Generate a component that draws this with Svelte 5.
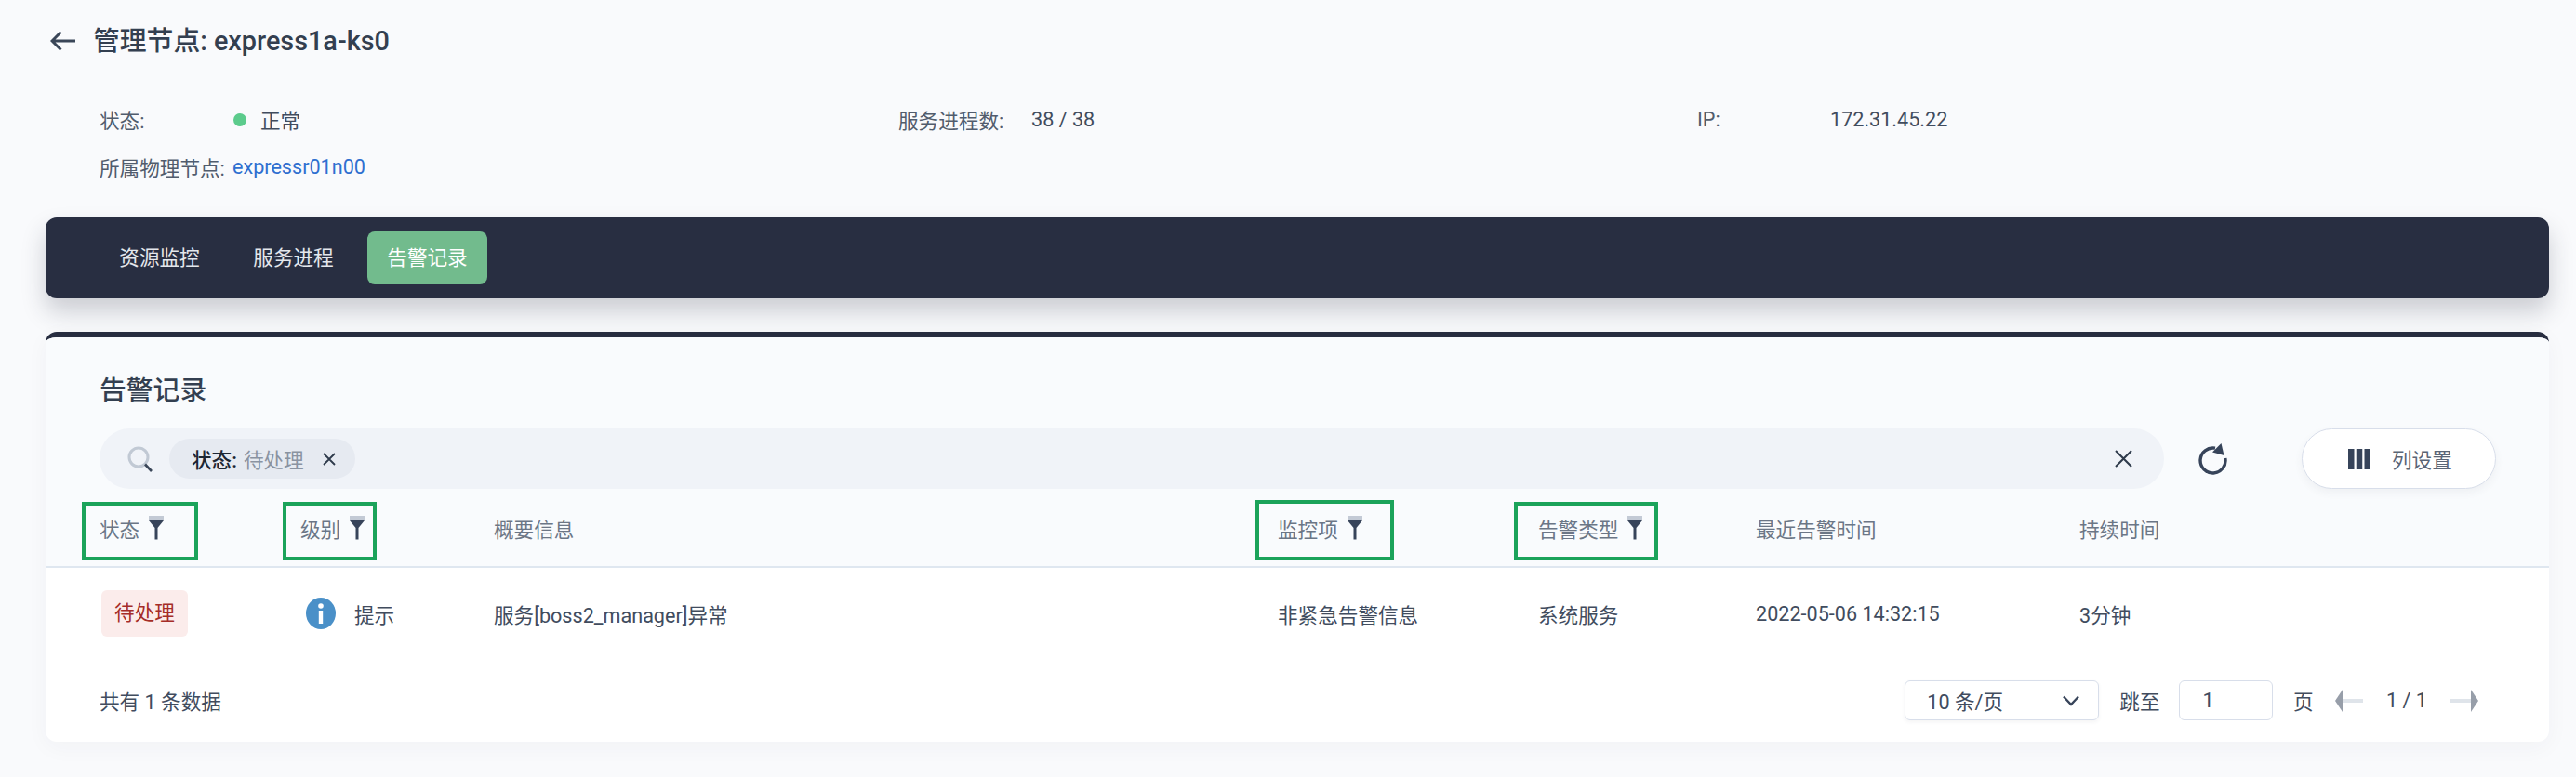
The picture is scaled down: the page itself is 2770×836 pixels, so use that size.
<script>
  const tabs = [
    { label: '资源监控', active: false },
    { label: '服务进程', active: false },
    { label: '告警记录', active: true }
  ];
  const cols = [
    { label: '状态', filter: true, box: 'b1' },
    { label: '级别', filter: true, box: 'b2' },
    { label: '概要信息' },
    { label: '监控项', filter: true, box: 'b3' },
    { label: '告警类型', filter: true, box: 'b4' },
    { label: '最近告警时间' },
    { label: '持续时间' }
  ];
</script>

{#snippet funnel()}
  <svg class="funnel" width="16" height="26" viewBox="0 0 16 26">
    <rect x="0" y="0" width="16" height="5" fill="#c3cad5" />
    <path d="M0 5H16L9.5 13V25.5H6.5V13Z" fill="#37445a" />
  </svg>
{/snippet}

<div class="page">
  <header class="top">
    <svg class="back" width="28" height="22" viewBox="0 0 28 22" fill="none" stroke="#3a4658" stroke-width="3">
      <path d="M27 11H2M11.5 1.5L2 11l9.5 9.5" />
    </svg>
    <h1>管理节点: express1a-ks0</h1>
  </header>

  <section class="info">
    <div class="item"><span class="k">状态:</span><span class="v"><i class="dot"></i>正常</span></div>
    <div class="item"><span class="k">服务进程数:</span><span class="v">38 / 38</span></div>
    <div class="item"><span class="k">IP:</span><span class="v">172.31.45.22</span></div>
    <div class="item"><span class="k">所属物理节点:</span><a class="v link" href="#top">expressr01n00</a></div>
  </section>

  <nav class="nav">
    {#each tabs as t}
      <span class="tab" class:active={t.active}>{t.label}</span>
    {/each}
  </nav>

  <section class="card">
    <div class="head">
      <h2>告警记录</h2>
      <div class="tools">
        <div class="search">
          <svg class="mag" width="28" height="28" viewBox="0 0 28 28" fill="none">
            <circle cx="12" cy="12" r="10" stroke="#c1c9d4" stroke-width="3" />
            <path d="M19 19.500L26 27" stroke="#3a4658" stroke-width="2.600" />
          </svg>
          <span class="chip">
            <b>状态:</b><span class="cv">待处理</span>
            <svg class="chipx" width="14" height="14" viewBox="0 0 14 14" stroke="#2e3a4b" stroke-width="1.800"><path d="M1 1l12 12M13 1L1 13" /></svg>
          </span>
          <svg class="clear" width="19" height="19" viewBox="0 0 19 19" stroke="#2e3a4b" stroke-width="2"><path d="M1 1l17 17M18 1L1 18" /></svg>
        </div>
        <svg class="refresh" width="32" height="34" viewBox="0 0 32 34" fill="none">
          <path d="M18 5.200A13.500 13.500 0 1 0 28.800 16" stroke="#37445a" stroke-width="3.400" />
          <path d="M24.500 0L27.500 13L15 9.500Z" fill="#37445a" />
        </svg>
        <button class="colset">
          <svg width="24" height="22" viewBox="0 0 24 22" fill="#37445a">
            <rect width="6.500" height="22" /><rect x="8.750" width="6.500" height="22" /><rect x="17.500" width="6.500" height="22" />
          </svg>
          <span>列设置</span>
        </button>
      </div>
      <div class="grid thead">
        {#each cols as c}
          <div class="th">
            {c.label}
            {#if c.filter}
              {@render funnel()}
              <i class="box {c.box}"></i>
            {/if}
          </div>
        {/each}
      </div>
    </div>

    <div class="body">
      <div class="grid row">
        <div><span class="tag">待处理</span></div>
        <div class="level">
          <svg width="32" height="34" viewBox="0 0 32 34">
            <ellipse cx="16" cy="17" rx="16" ry="17" fill="#4a90c8" />
            <circle cx="16" cy="9" r="2.800" fill="#fff" />
            <rect x="13.800" y="14" width="4.400" height="14" fill="#fff" />
          </svg>
          提示
        </div>
        <div>服务[boss2_manager]异常</div>
        <div>非紧急告警信息</div>
        <div>系统服务</div>
        <div>2022-05-06 14:32:15</div>
        <div>3分钟</div>
      </div>

      <footer class="foot">
        <span>共有 1 条数据</span>
        <div class="pager">
          <div class="select">
            <span>10 条/页</span>
            <svg width="18" height="12" viewBox="0 0 18 12" fill="none" stroke="#37445a" stroke-width="2.400"><path d="M1 1.500l8 8.500 8-8.500" /></svg>
          </div>
          <span class="jump">跳至</span>
          <div class="input">1</div>
          <span class="unit">页</span>
          <svg class="arrow" width="30" height="24" viewBox="0 0 30 24">
            <rect x="7" y="10" width="23" height="4" fill="#dfe4ea" /><path d="M0 12L8 0V24Z" fill="#979ea9" />
          </svg>
          <span class="count">1 / 1</span>
          <svg class="arrow" width="30" height="24" viewBox="0 0 30 24">
            <rect x="0" y="10" width="23" height="4" fill="#dfe4ea" /><path d="M30 12L22 0V24Z" fill="#979ea9" />
          </svg>
        </div>
      </footer>
    </div>
  </section>
</div>

<style>
  :global(body) {
    margin: 0;
    background: #f9fafc;
  }
  .page {
    width: 2770px;
    height: 836px;
    overflow: hidden;
    box-sizing: border-box;
    padding: 0 29px 0 49px;
    background: #f9fafc;
    font-family: Roboto, "Noto Sans CJK SC", sans-serif;
    font-size: 21.6px;
    color: #414c5e;
  }
  .top {
    height: 86px;
    display: flex;
    align-items: center;
    gap: 18px;
    padding-left: 5px;
  }
  .back { margin-top: 1px; }
  h1 {
    margin: 0 0 3px;
    font-size: 28.8px;
    font-weight: 500;
    color: #333f50;
  }
  .info {
    display: grid;
    grid-template-columns: repeat(3, 859px);
    grid-auto-rows: 51px;
    padding: 17px 0 0 58px;
    height: 148px;
    box-sizing: border-box;
  }
  .item {
    display: flex;
    align-items: center;
    color: #515c6d;
  }
  .k { width: 143px; flex: none; white-space: nowrap; }
  .v { color: #414c5e; display: inline-flex; align-items: center; }
  .link { color: #2f6fd0; text-decoration: none; }
  .dot {
    width: 14px;
    height: 14px;
    border-radius: 50%;
    background: #5ccb8c;
    margin: 0 15px 0 1px;
  }
  .nav {
    height: 87px;
    box-sizing: border-box;
    background: #282e41;
    border-radius: 12px;
    display: flex;
    align-items: center;
    gap: 16px;
    padding-left: 58px;
    box-shadow: 0 14px 26px rgba(40, 46, 65, 0.22);
    position: relative;
    z-index: 1;
  }
  .tab {
    height: 57px;
    width: 129px;
    margin-right: -1px;
    text-align: center;
    line-height: 57px;
    color: #e4e7ec;
    border-radius: 8px;
  }
  .tab.active {
    background: #72bb8d;
    color: #fff;
  }
  .card {
    margin-top: 36px;
    height: 441px;
    box-sizing: border-box;
    border-top: 6px solid #282e41;
    border-radius: 12px;
    background: #fff;
    overflow: hidden;
    box-shadow: 0 6px 24px rgba(40, 46, 65, 0.04);
  }
  .head {
    background: #f9fbfd;
    height: 248px;
    box-sizing: border-box;
    border-bottom: 2px solid #dfe7f0;
    padding-top: 38px;
  }
  h2 {
    margin: 0 0 0 58px;
    font-size: 28.8px;
    line-height: 38px;
    font-weight: 500;
    color: #333f50;
  }
  .tools {
    display: flex;
    align-items: center;
    margin: 22px 0 0 58px;
    height: 65px;
  }
  .search {
    width: 2220px;
    height: 65px;
    box-sizing: border-box;
    border-radius: 33px;
    background: #f0f3f8;
    display: flex;
    align-items: center;
    padding: 0 34px 0 30px;
    flex: none;
  }
  .chip {
    margin-left: 17px;
    height: 43px;
    width: 200px;
    box-sizing: border-box;
    border-radius: 22px;
    background: #e6eaf1;
    display: flex;
    align-items: center;
    padding-left: 24px;
    color: #8a93a1;
  }
  .chip b { color: #1d2633; font-weight: 500; margin-right: 7px; }
  .chipx { margin-left: 20px; }
  .clear { margin-left: auto; }
  .refresh { margin-left: 37px; flex: none; }
  .colset {
    margin-left: 79px;
    width: 209px;
    height: 65px;
    box-sizing: border-box;
    border: 1px solid #d8deea;
    border-radius: 33px;
    background: #fff;
    box-shadow: 0 4px 10px rgba(60, 70, 90, 0.06);
    display: flex;
    align-items: center;
    gap: 23px;
    padding: 0 0 0 49px;
    font: inherit;
    color: #5a6576;
  }
  .grid {
    display: grid;
    grid-template-columns: 216px 208px 843px 280px 234px 348px 1fr;
    padding-left: 58px;
  }
  .thead { height: 84px; align-items: center; color: #6b7686; }
  .th {
    position: relative;
    display: flex;
    align-items: center;
    gap: 10px;
    height: 100%;
  }
  .funnel { margin-top: 0; }
  .box {
    position: absolute;
    box-sizing: border-box;
    border: 4px solid #1ba35a;
    top: 14px;
    height: 63px;
  }
  .b1 { left: -19px; width: 125px; }
  .b2 { left: -19px; width: 101px; }
  .b3 { left: -24px; width: 149px; top: 12px; height: 65px; }
  .b4 { left: -26px; width: 155px; }
  .body { background: #fff; }
  .row {
    height: 98px;
    align-items: center;
    color: #414c5e;
  }
  .tag {
    display: inline-block;
    margin-left: 2px;
    width: 93px;
    height: 50px;
    line-height: 50px;
    text-align: center;
    border-radius: 6px;
    background: #fbeceb;
    color: #a52d28;
  }
  .level {
    display: flex;
    align-items: center;
    gap: 20px;
    margin-left: 6px;
  }
  .foot {
    display: flex;
    align-items: center;
    justify-content: space-between;
    padding: 23px 76px 0 58px;
  }
  .pager { display: flex; align-items: center; }
  .select {
    width: 209px;
    height: 43px;
    box-sizing: border-box;
    border: 1px solid #d8deea;
    border-radius: 6px;
    box-shadow: 0 2px 4px rgba(60, 70, 90, 0.06);
    display: flex;
    align-items: center;
    justify-content: space-between;
    padding: 0 20px 0 23px;
  }
  .jump { margin-left: 22px; }
  .input {
    margin-left: 21px;
    width: 101px;
    height: 43px;
    box-sizing: border-box;
    border: 1px solid #d8deea;
    border-radius: 6px;
    line-height: 41px;
    padding-left: 24px;
  }
  .unit { margin-left: 21.500px; }
  .arrow { margin-left: 23.500px; }
  .count { margin-left: 25px; }
  .count + .arrow { margin-left: 25px; }
</style>
